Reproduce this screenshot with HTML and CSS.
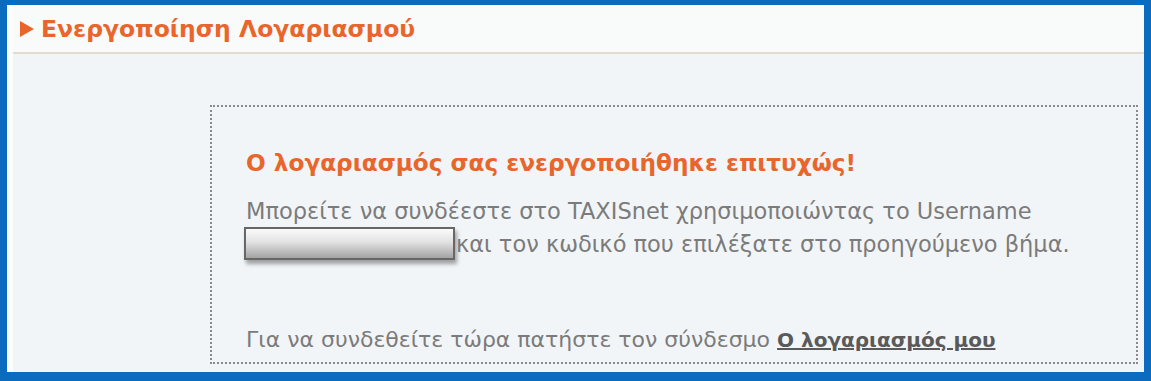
FILE: index.html
```html
<!DOCTYPE html>
<html>
<head>
    <title>Ενεργοποίηση Λογαριασμού</title>
    <link rel="stylesheet" href="styles.css">
</head>
<body>
    <div class="frame">
        <div class="header">
            <span class="arrow"></span>
            <h1>Ενεργοποίηση Λογαριασμού</h1>
        </div>
        <div class="content">
            <div class="message-box">
                <h2>Ο λογαριασμός σας ενεργοποιήθηκε επιτυχώς!</h2>
                <p class="info">
                    Μπορείτε να συνδέεστε στο TAXISnet χρησιμοποιώντας το Username<br>
                    <span class="hidden-name"></span>και τον κωδικό που επιλέξατε στο προηγούμενο βήμα.
                </p>
                <p class="info login">
                    Για να συνδεθείτε τώρα πατήστε τον σύνδεσμο <a href="#">Ο λογαριασμός μου</a>
                </p>
            </div>
        </div>
    </div>
</body>
</html>
```

FILE: styles.css
```css
html, body {
    margin: 0;
    padding: 0;
}

body {
    font-family: "DejaVu Sans", Verdana, sans-serif;
    background-color: #0b6bbf;
    width: 1151px;
    height: 381px;
    overflow: hidden;
}

.frame {
    box-sizing: border-box;
    margin: 5px 7px 0 7px;
    height: 367px;
    background-color: #f2f5f7;
    border-left: 6px solid #fbfcfc;
    display: flex;
    flex-direction: column;
}

.header {
    height: 49px;
    background-color: #f9fafa;
    border-bottom: 2px solid #e2dccd;
    display: flex;
    align-items: center;
    padding-left: 7px;
    box-sizing: border-box;
}

.arrow {
    width: 0;
    height: 0;
    border-top: 8px solid transparent;
    border-bottom: 8px solid transparent;
    border-left: 14px solid #e8662b;
    margin-right: 7px;
}

h1 {
    margin: 0;
    font-size: 23.5px;
    font-weight: bold;
    color: #e8662b;
}

.content {
    flex: 1;
    padding: 51px 6px 3px 197px;
}

.message-box {
    box-sizing: border-box;
    height: 259px;
    border: 2px dotted #8a8a8a;
    padding: 42px 20px 0 34px;
}

h2 {
    margin: 0 0 18px 0;
    font-size: 23.2px;
    line-height: 28px;
    font-weight: bold;
    color: #e8662b;
}

.info {
    margin: 0;
    font-size: 22.5px;
    line-height: 33px;
    color: #7b7b7b;
}

.hidden-name {
    display: inline-block;
    vertical-align: middle;
    width: 211px;
    height: 33px;
    margin: -4px 1px 0 -2px;
    border: 2px solid #676767;
    background: linear-gradient(to bottom, #fbfbfb 0%, #e2e2e2 45%, #a3a3a3 100%);
    box-shadow: 2px 4px 4px rgba(0, 0, 0, 0.35);
    box-sizing: border-box;
}

.login {
    margin-top: 62px;
    font-size: 22px;
}

.login a {
    font-size: 20px;
    color: #5a5a5a;
    font-weight: bold;
    text-decoration: underline;
}
```
